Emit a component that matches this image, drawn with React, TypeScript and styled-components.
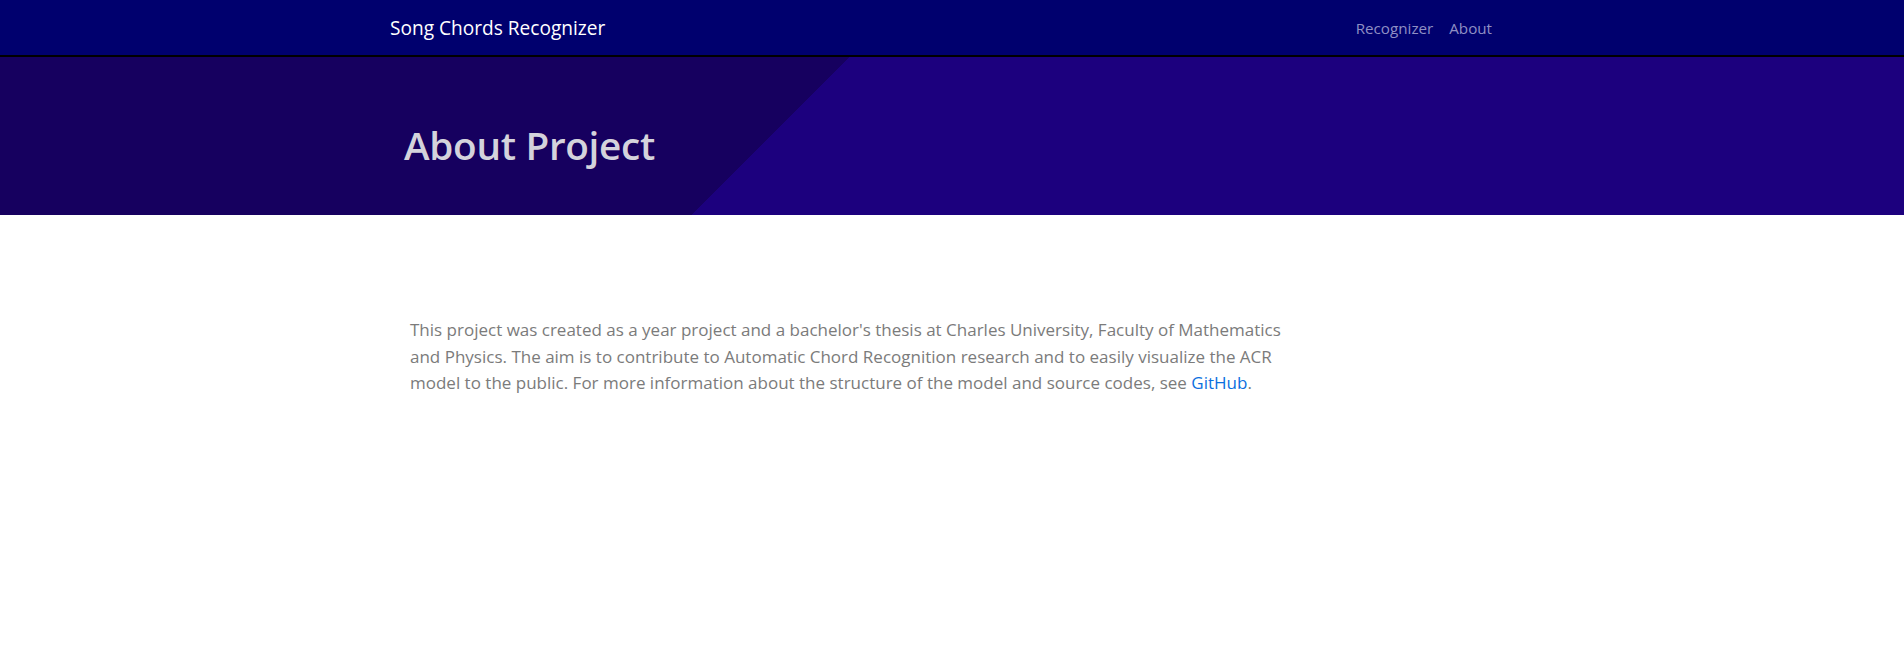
import React from "react";
import styled, { createGlobalStyle } from "styled-components";

const GlobalStyle = createGlobalStyle`
  html, body {
    margin: 0;
    padding: 0;
    background: #ffffff;
    font-family: "Open Sans", "Noto Sans", sans-serif;
  }
`;

const Navbar = styled.nav`
  height: 55px;
  background: #00006e;
  border-bottom: 2px solid #000000;
`;

const NavInner = styled.div`
  width: 1110px;
  margin: 0 0 0 390px;
  height: 100%;
  display: flex;
  align-items: center;
  justify-content: space-between;
`;

const Brand = styled.a`
  color: #ffffff;
  font-size: 19.1px;
  text-decoration: none;
  padding-top: 1px;
`;

const NavLinks = styled.div`
  display: flex;
  margin-right: 4px;
  padding-top: 1px;
`;

const NavLink = styled.a`
  color: #8f8fc4;
  font-size: 15.2px;
  padding: 0 8px;
  text-decoration: none;
  &:last-child {
    padding-right: 4px;
  }
`;

const Hero = styled.header`
  height: 158px;
  background: linear-gradient(135deg, #16005f 601px, #1c007e 601px);
  display: flex;
  align-items: center;
`;

const HeroTitle = styled.h1`
  margin: 18px 0 0 404px;
  color: #d4d3dc;
  font-size: 38.7px;
  font-weight: 600;
  letter-spacing: -0.3px;
`;

const Content = styled.main`
  padding: 102px 0 0 410px;
`;

const Paragraph = styled.p`
  margin: 0;
  width: 882px;
  color: #7b7b7b;
  font-size: 17px;
  line-height: 26.7px;
`;

const Link = styled.a`
  color: #0b6fe0;
  text-decoration: none;
`;

export default function App() {
  return (
    <>
      <GlobalStyle />
      <Navbar>
        <NavInner>
          <Brand href="#">Song Chords Recognizer</Brand>
          <NavLinks>
            <NavLink href="#">Recognizer</NavLink>
            <NavLink href="#">About</NavLink>
          </NavLinks>
        </NavInner>
      </Navbar>
      <Hero>
        <HeroTitle>About Project</HeroTitle>
      </Hero>
      <Content>
        <Paragraph>
          This project was created as a year project and a bachelor's thesis at
          Charles University, Faculty of Mathematics and Physics. The aim is to
          contribute to Automatic Chord Recognition research and to easily
          visualize the ACR model to the public. For more information about the
          structure of the model and source codes, see <Link href="#">GitHub</Link>.
        </Paragraph>
      </Content>
    </>
  );
}
